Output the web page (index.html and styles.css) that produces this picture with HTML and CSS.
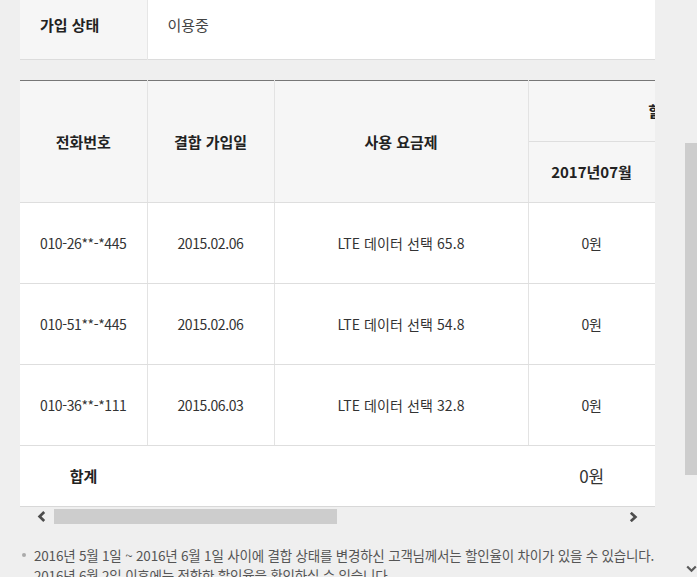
FILE: index.html
```html
<!DOCTYPE html>
<html lang="ko">
<head>
<meta charset="utf-8">
<link rel="stylesheet" href="styles.css">
</head>
<body>
<div class="page">
  <table class="info">
    <tr>
      <th class="info-th">가입 상태</th>
      <td class="info-td">이용중</td>
    </tr>
  </table>

  <div class="scroll-box">
    <div class="scroll-view">
      <table class="grid">
        <colgroup>
          <col class="c-narrow"><col class="c-narrow"><col class="c-wide"><col class="c-narrow"><col class="c-narrow"><col class="c-narrow"><col class="c-narrow"><col class="c-narrow"><col class="c-narrow"><col class="c-narrow">
        </colgroup>
        <thead>
          <tr class="h1">
            <th rowspan="2">전화번호</th>
            <th rowspan="2">결합 가입일</th>
            <th rowspan="2">사용 요금제</th>
            <th colspan="2" class="group-th">할인 금액</th>
            <th colspan="5">월별 청구 금액</th>
          </tr>
          <tr class="h2">
            <th>2017년07월</th>
            <th>2017년08월</th>
            <th>2017년07월</th>
            <th>2017년08월</th>
            <th>2017년09월</th>
            <th>2017년10월</th>
            <th>2017년11월</th>
          </tr>
        </thead>
        <tbody>
          <tr class="row">
            <td>010-26**-*445</td><td>2015.02.06</td><td class="plan">LTE 데이터 선택 65.8</td><td>0원</td><td>0원</td><td>0원</td><td>0원</td><td>0원</td><td>0원</td><td>0원</td>
          </tr>
          <tr class="row">
            <td>010-51**-*445</td><td>2015.02.06</td><td class="plan">LTE 데이터 선택 54.8</td><td>0원</td><td>0원</td><td>0원</td><td>0원</td><td>0원</td><td>0원</td><td>0원</td>
          </tr>
          <tr class="row">
            <td>010-36**-*111</td><td>2015.06.03</td><td class="plan">LTE 데이터 선택 32.8</td><td>0원</td><td>0원</td><td>0원</td><td>0원</td><td>0원</td><td>0원</td><td>0원</td>
          </tr>
          <tr class="total">
            <td class="total-label">합계</td><td colspan="2"></td><td class="total-val">0원</td><td class="total-val">0원</td><td class="total-val">0원</td><td class="total-val">0원</td><td class="total-val">0원</td><td class="total-val">0원</td><td class="total-val">0원</td>
          </tr>
        </tbody>
      </table>
    </div>
    <div class="hbar">
      <span class="arrow arrow-left">
        <svg width="9" height="11" viewBox="0 0 9 11"><path d="M7.2 1 L2.6 5.5 L7.2 10" fill="none" stroke="#4d4d4d" stroke-width="2.7"/></svg>
      </span>
      <div class="htrack"><div class="hthumb"></div></div>
      <span class="arrow arrow-right">
        <svg width="9" height="10" viewBox="0 0 9 10"><path d="M1.8 0.8 L6.4 5 L1.8 9.2" fill="none" stroke="#4d4d4d" stroke-width="2.7"/></svg>
      </span>
    </div>
  </div>

  <ul class="notes">
    <li>2016년 5월 1일 ~ 2016년 6월 1일 사이에 결합 상태를 변경하신 고객님께서는 할인율이 차이가 있을 수 있습니다.<br>2016년 6월 2일 이후에는 적합한 할인율을 확인하실 수 있습니다.</li>
  </ul>
</div>

<div class="vbar">
  <div class="vthumb"></div>
  <svg class="vdown" width="11" height="8" viewBox="0 0 11 8"><path d="M1.2 1.5 L5.5 5.8 L9.8 1.5" fill="none" stroke="#5a5a5a" stroke-width="2.2"/></svg>
</div>
</body>
</html>
```

FILE: styles.css
```css
html, body {
  margin: 0;
  padding: 0;
  background: #efefef;
  height: 100%;
  overflow: hidden;
}
body {
  font-family: "Noto Sans CJK KR", "Noto Sans", sans-serif;
  color: #333;
  position: relative;
}
.page {
  width: 635px;
  padding-left: 20px;
}
.info {
  width: 635px;
  border-collapse: collapse;
  border-bottom: 1px solid #dcdcdc;
}
.info-th {
  width: 127px;
  height: 59px;
  padding: 0 0 10px 20px;
  box-sizing: border-box;
  background: #f6f6f6;
  text-align: left;
  font-size: 15px;
  font-weight: bold;
  color: #222;
  border-right: 1px solid #e6e6e6;
}
.info-td {
  background: #fff;
  padding: 0 0 10px 20px;
  font-size: 15px;
  color: #444;
}
.scroll-box {
  margin-top: 20px;
}
.scroll-view {
  width: 635px;
  overflow: hidden;
}
.grid {
  border-collapse: collapse;
  table-layout: fixed;
  width: 1397px;
  border-top: 1px solid #777;
  background: #fff;
}
.c-narrow { width: 127px; }
.c-wide { width: 254px; }
.grid th, .grid td {
  border-right: 1px solid #e3e3e3;
  border-bottom: 1px solid #dedede;
  text-align: center;
  padding: 0;
}
.grid th {
  background: #f6f6f6;
  font-size: 15px;
  font-weight: bold;
  color: #222;
  height: 60px;
}
.grid .group-th {
  padding-left: 46px;
}
.grid td {
  font-size: 14px;
  color: #333;
  height: 80px;
  letter-spacing: -0.4px;
}
.grid .plan {
  letter-spacing: 0.1px;
}
.total td {
  height: 60px;
  border-right: none;
  border-bottom: 1px solid #d8d8d8;
}
.grid .total-label {
  font-weight: bold;
  font-size: 15px;
  letter-spacing: 0;
  color: #222;
}
.grid .total-val {
  font-size: 17px;
}
.hbar {
  display: flex;
  align-items: center;
  height: 18px;
  margin-top: 1px;
}
.arrow {
  width: 34px;
  height: 18px;
  display: flex;
  align-items: center;
}
.arrow-left {
  padding-left: 17px;
  box-sizing: border-box;
}
.arrow-right {
  padding-left: 8px;
  box-sizing: border-box;
}
.htrack {
  flex: 1;
  height: 15px;
}
.hthumb {
  width: 283px;
  height: 15px;
  background: #cdcdcd;
}
.notes {
  list-style: none;
  margin: 19px 0 0 0;
  padding: 0;
  font-size: 13.5px;
  line-height: 20px;
  color: #555;
  width: 700px;
}
.notes li {
  position: relative;
  padding-left: 14px;
  letter-spacing: -0.2px;
}
.notes li::before {
  content: "";
  position: absolute;
  left: 2px;
  top: 8px;
  width: 4px;
  height: 4px;
  border-radius: 50%;
  background: #aaa;
}
.vbar {
  position: absolute;
  top: 0;
  right: 0;
  width: 17px;
  height: 577px;
}
.vthumb {
  position: absolute;
  left: 5px;
  right: 0;
  top: 143px;
  height: 332px;
  background: #cdcdcd;
}
.vdown {
  position: absolute;
  left: 6px;
  top: 565px;
}
```
